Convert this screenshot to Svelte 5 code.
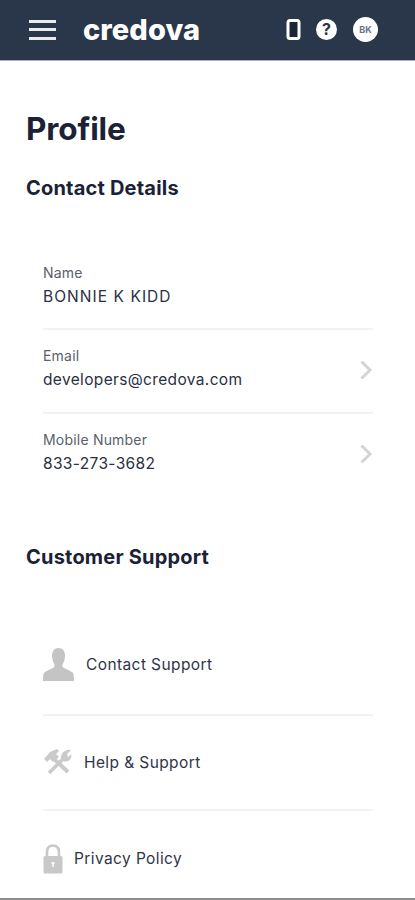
<script>
  const contact = [
    { label: 'Name', value: 'BONNIE K KIDD', link: false },
    { label: 'Email', value: 'developers@credova.com', link: true },
    { label: 'Mobile Number', value: '833-273-3682', link: true }
  ];
</script>

<div class="page">
  <header class="topbar">
    <button class="menu" aria-label="Menu"><span></span><span></span><span></span></button>
    <div class="logo">credova</div>
    <div class="actions">
      <svg class="phone" width="15" height="21" viewBox="0 0 15 21" aria-hidden="true">
        <rect x="2" y="1.5" width="11" height="18" rx="2" fill="#1b2536" stroke="#fff" stroke-width="3" />
      </svg>
      <div class="help">?</div>
      <div class="avatar">BK</div>
    </div>
  </header>

  <main class="content">
    <h1>Profile</h1>
    <h2>Contact Details</h2>

    <ul class="details">
      {#each contact as item}
        <li class="detail">
          <div>
            <div class="label">{item.label}</div>
            <div class="value">{item.value}</div>
          </div>
          {#if item.link}
            <svg width="14" height="22" viewBox="0 0 14 22" aria-hidden="true">
              <path d="M2.5 2.5 L11 11 L2.5 19.5" fill="none" stroke="#d4d4d4" stroke-width="3" />
            </svg>
          {/if}
        </li>
      {/each}
    </ul>

    <h2 class="support-title">Customer Support</h2>

    <ul class="support">
      <li class="support-row first">
        <svg width="31" height="33" viewBox="0 0 31 33" aria-hidden="true">
          <path fill="#c4c4c4" d="M15.500 0c4 0 6.500 3 6.500 7.500 0 3.500-1 6.500-2.200 8.500-.6 1-.5 2.800.5 3.500 2.500 1.800 8.700 3.300 10 6 .5 1.500.7 4.500.7 7.500H0c0-3 .2-6 .7-7.500 1.300-2.700 7.500-4.200 10-6 1-.7 1.100-2.500.5-3.500C10 14 9 11 9 7.500 9 3 11.500 0 15.500 0z" />
        </svg>
        <span>Contact Support</span>
      </li>
      <li class="support-row second">
        <svg width="28" height="26" viewBox="0 0 28 26" aria-hidden="true">
          <path fill="none" stroke="#cacaca" stroke-width="4" d="M8 8 L24 23" />
          <path fill="none" stroke="#cacaca" stroke-width="3.500" d="M19 10 L5 24" />
          <path fill="#cacaca" d="M0 10 L6 3 L13 0 L15 2 L12 5 L15 8 L9 13 L6 10 L3 13 Z" />
          <path fill="#cacaca" d="M17 10 C16 5 21 0 27 1 L23 5 L24 8 L27.500 5 C28 11 23 14 19 12 Z" />
        </svg>
        <span>Help &amp; Support</span>
      </li>
      <li class="support-row third">
        <svg width="20" height="30" viewBox="0 0 20 30" aria-hidden="true">
          <path fill="none" stroke="#c8c8c8" stroke-width="2.600" d="M4 13 V8 C4 4 6.500 1.500 10 1.500 S16 4 16 8 V13" />
          <rect x="0.500" y="12" width="19" height="17.500" rx="1.500" fill="#c8c8c8" />
          <path fill="#fff" d="M8.500 18 h3 v1.500 l-.8 .8 v2.700 h-1.400 v-2.700 l-.8 -.8 z" />
        </svg>
        <span>Privacy Policy</span>
      </li>
    </ul>
  </main>
</div>

<style>
  :global(body) {
    margin: 0;
    background: #fff;
  }

  .page {
    height: 900px;
    overflow: hidden;
    box-sizing: border-box;
    border-bottom: 2px solid #8c8c8c;
    font-family: Inter, "Noto Sans", sans-serif;
    color: #1b2238;
  }

  .topbar {
    height: 61px;
    box-sizing: border-box;
    background: #2a364a;
    border-bottom: 1px solid #aab0b8;
    display: flex;
    align-items: center;
    padding-left: 29px;
    padding-right: 37px;
  }

  .menu {
    width: 27px;
    height: 20px;
    padding: 0;
    border: 0;
    background: none;
    display: flex;
    flex-direction: column;
    justify-content: space-between;
    margin-top: -1px;
  }

  .menu span {
    height: 3px;
    background: #e9ebee;
    display: block;
  }

  .logo {
    margin-left: 27px;
    font-size: 29px;
    font-weight: 800;
    color: #fff;
    letter-spacing: 0.1px;
    line-height: 1;
    margin-top: -2px;
  }

  .actions {
    margin-left: auto;
    display: flex;
    align-items: center;
    margin-top: -1px;
  }

  .help {
    width: 21px;
    height: 21px;
    margin-left: 15px;
    border-radius: 50%;
    background: #fff;
    color: #2a364a;
    font-size: 16px;
    font-weight: 700;
    text-align: center;
    line-height: 21px;
  }

  .avatar {
    width: 25px;
    height: 25px;
    margin-left: 16px;
    border-radius: 50%;
    background: #fff;
    color: #6a7388;
    font-size: 9px;
    font-weight: 700;
    text-align: center;
    line-height: 25px;
  }

  .content {
    padding: 0 42px 0 26px;
  }

  h1 {
    margin: 0;
    padding-top: 48px;
    font-size: 31.5px;
    line-height: 40px;
    font-weight: 700;
    letter-spacing: -0.1px;
  }

  h2 {
    margin: 0;
    padding-top: 24px;
    font-size: 20px;
    line-height: 30px;
    font-weight: 700;
    letter-spacing: 0.2px;
  }

  ul {
    list-style: none;
    margin: 0;
    padding: 0 0 0 17px;
  }

  .details {
    padding-top: 60px;
  }

  .detail {
    box-sizing: border-box;
    padding: 16px 0 18px;
    border-bottom: 2px solid #f2f2f2;
    display: flex;
    align-items: center;
    justify-content: space-between;
  }

  .detail:first-child {
    padding-top: 0;
    padding-bottom: 17px;
  }

  .detail:first-child .value {
    letter-spacing: 1.05px;
  }

  .detail:last-child {
    border-bottom: 0;
  }

  .label {
    font-size: 14px;
    line-height: 20px;
    color: #5a5f6b;
    letter-spacing: 0.2px;
  }

  .value {
    font-size: 15.5px;
    line-height: 28px;
    letter-spacing: 0.35px;
    color: #2a3042;
  }

  .support-title {
    padding-top: 46px;
  }

  .support {
    padding-top: 49px;
  }

  .support-row {
    display: flex;
    align-items: center;
    font-size: 15.5px;
    letter-spacing: 0.4px;
    color: #2f3548;
    border-bottom: 2px solid #f2f2f2;
    height: 95px;
    box-sizing: border-box;
  }

  .support-row.first {
    gap: 12px;
    padding-bottom: 6px;
  }

  .support-row.second {
    gap: 12px;
    padding-bottom: 1px;
    padding-left: 1px;
  }

  .support-row.third {
    gap: 11px;
    border-bottom: 0;
  }
</style>
